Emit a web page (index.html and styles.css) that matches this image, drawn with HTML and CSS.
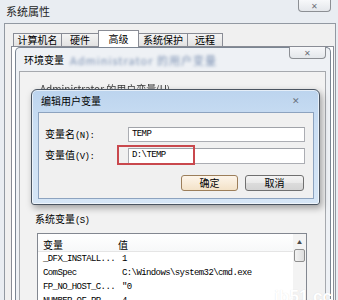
FILE: index.html
```html
<!DOCTYPE html>
<html lang="zh-CN">
<head>
    <meta charset="UTF-8">
    <title>系统属性</title>
    <link rel="stylesheet" href="styles.css">
</head>
<body>
<div class="win">
    <div class="win-title">
        <span class="win-caption">系统属性</span>
        <div class="close-btn">✕</div>
    </div>
    <div class="win-body">
        <div class="tabs">
            <div class="tab t1">计算机名</div>
            <div class="tab t2">硬件</div>
            <div class="tab t3 selected">高级</div>
            <div class="tab t4">系统保护</div>
            <div class="tab t5">远程</div>
        </div>
        <div class="tab-panel">
            <div class="env">
                <div class="env-title">
                    <span>环境变量</span>
                    <span class="smudge">Administrator 的用户变量</span>
                    <div class="close-btn env-close">✕</div>
                </div>
                <div class="env-body">
                    <div class="user-label">Administrator 的用户变量(U)</div>
                    <div class="user-list"></div>
                    <div class="group-label">系统变量<span class="mono">(S)</span></div>
                    <div class="listbox">
                        <div class="list-main">
                            <div class="list-head"><span class="col1">变量</span><span class="col2">值</span></div>
                            <div class="row mono"><span class="col1">_DFX_INSTALL...</span><span class="col2">1</span></div>
                            <div class="row mono"><span class="col1">ComSpec</span><span class="col2">C:\Windows\system32\cmd.exe</span></div>
                            <div class="row mono"><span class="col1">FP_NO_HOST_C...</span><span class="col2">"0</span></div>
                            <div class="row mono"><span class="col1">NUMBER_OF_PR...</span><span class="col2">4</span></div>
                        </div>
                        <div class="scrollbar">
                            <div class="sb-arrow">▲</div>
                            <div class="sb-thumb"></div>
                            <div class="sb-track"></div>
                            <div class="sb-arrow">▼</div>
                        </div>
                    </div>
                </div>
            </div>
        </div>
    </div>

    <div class="dialog">
        <div class="dlg-title">
            <span>编辑用户变量</span>
            <span class="dlg-x">✕</span>
        </div>
        <div class="dlg-client">
            <div class="field">
                <span class="field-label">变量名<span class="mono">(N):</span></span>
                <div class="input mono">TEMP</div>
            </div>
            <div class="field field-value">
                <span class="field-label">变量值<span class="mono">(V):</span></span>
                <div class="input mono">D:\TEMP</div>
                <div class="mark"></div>
            </div>
            <div class="dlg-buttons">
                <div class="btn btn-default">确定</div>
                <div class="btn btn-cancel">取消</div>
            </div>
        </div>
    </div>

    <div class="watermark">jb51.cc</div>
</div>
</body>
</html>
```

FILE: styles.css
```css
body {
    margin: 0;
    font-family: "Noto Sans CJK SC", "Liberation Sans", sans-serif;
    font-size: 10px;
    line-height: 12px;
    color: #000;
}
.mono {
    font-family: "Liberation Mono", "Noto Sans CJK SC", monospace;
    font-size: 9px;
    letter-spacing: -0.6px;
}
.win {
    position: relative;
    width: 338px;
    height: 300px;
    overflow: hidden;
    background-color: #e9edf2;
    display: flex;
    flex-direction: column;
}
.win-title {
    height: 23px;
    display: flex;
    align-items: flex-start;
    flex-shrink: 0;
}
.win-caption {
    font-size: 11px;
    line-height: 23px;
    margin-left: 6px;
    color: #1e1e1e;
}
.close-btn {
    margin-left: auto;
    margin-right: 7px;
    width: 33px;
    height: 12px;
    box-sizing: border-box;
    border: 1px solid #8c8f94;
    border-top: none;
    border-radius: 0 0 4px 4px;
    background: linear-gradient(#f7f8fa, #e4e7eb);
    color: #6d7178;
    font-size: 8px;
    line-height: 11px;
    text-align: center;
}
.win-body {
    flex: 1;
    margin: 0 2px 0 4px;
    padding: 6px 1px 0 6px;
    border: 1px solid #9299a2;
    border-bottom: none;
    background-color: #f0f0f0;
    display: flex;
    flex-direction: column;
}
.tabs {
    display: flex;
    align-items: flex-end;
    height: 16px;
    margin-left: 2px;
    flex-shrink: 0;
}
.tab {
    box-sizing: border-box;
    height: 13px;
    margin-right: -1px;
    border: 1px solid #898c95;
    border-bottom: none;
    background: linear-gradient(#f4f4f4, #e2e2e2);
    text-align: center;
    line-height: 12px;
}
.t1 { width: 49px; }
.t2 { width: 38px; }
.t3 { width: 41px; }
.t4 { width: 50px; }
.t5 { width: 36px; }
.tab.selected {
    height: 17px;
    margin-bottom: -1px;
    background: #fff;
    position: relative;
    z-index: 1;
    line-height: 15px;
}
.tab-panel {
    flex: 1;
    border: 1px solid #898c95;
    border-bottom: none;
    background-color: #fff;
    padding: 0 2px 0 3px;
    display: flex;
    flex-direction: column;
}
.env {
    flex: 1;
    border: 1px solid #7b8592;
    border-bottom: none;
    border-radius: 5px 5px 0 0;
    background-color: #eef1f5;
    padding: 0 4px 0 3px;
    display: flex;
    flex-direction: column;
}
.env-title {
    height: 23px;
    display: flex;
    align-items: center;
    padding-left: 5px;
    flex-shrink: 0;
}
.smudge {
    margin-left: 6px;
    color: #7e93b4;
    filter: blur(1.4px);
    font-size: 11px;
    letter-spacing: 1px;
}
.env-close {
    align-self: flex-start;
    margin-top: -1px;
    margin-right: 0;
    width: 37px;
}
.env-body {
    flex: 1;
    border: 1px solid #a6a9ae;
    border-bottom: none;
    background-color: #f2f2f2;
    padding: 11px 0 0 15px;
}
.user-label {
    margin-left: 5px;
    color: #3a3a3a;
    filter: blur(0.6px);
}
.user-list {
    height: 104px;
    margin: 4px 18px 0 2px;
    border: 1px solid #828790;
    background-color: #fff;
}
.group-label {
    margin-top: 8px;
}
.listbox {
    display: flex;
    height: 80px;
    margin: 6px 18px 0 2px;
    border: 1px solid #828790;
    background-color: #fff;
}
.list-main {
    flex: 1;
}
.list-head {
    display: flex;
    height: 18px;
    box-sizing: border-box;
    padding-top: 5px;
    border-bottom: 1px solid #e5e5e5;
    background: linear-gradient(#fff, #f7f8f9);
}
.row {
    display: flex;
    height: 14px;
    line-height: 14px;
}
.col1 {
    width: 80px;
    padding-left: 5px;
    box-sizing: border-box;
    white-space: nowrap;
}
.col2 {
    padding-left: 4px;
    white-space: nowrap;
}
.list-head .col2 {
    padding-left: 0;
}
.scrollbar {
    width: 13px;
    display: flex;
    flex-direction: column;
    background-color: #f3f3f3;
}
.sb-arrow {
    height: 15px;
    font-size: 5px;
    line-height: 15px;
    text-align: center;
    color: #4a4a4a;
}
.sb-thumb {
    height: 13px;
    box-sizing: border-box;
    margin: 0 1px;
    border: 1px solid #8f8f8f;
    border-radius: 2px;
    background: linear-gradient(90deg, #f3f3f3, #dedede);
}
.sb-track {
    flex: 1;
}
.dialog {
    position: absolute;
    left: 31px;
    top: 89px;
    width: 289px;
    height: 116px;
    box-sizing: border-box;
    border: 1px solid #4b5561;
    border-radius: 6px 6px 3px 3px;
    background: linear-gradient(#bcd4ee, #cadef3 30%, #d6e6f6);
    box-shadow: 2px 3px 7px rgba(0, 0, 0, 0.35), inset 0 0 0 1px rgba(255, 255, 255, 0.6);
    padding: 0 5px 5px 6px;
    display: flex;
    flex-direction: column;
    z-index: 2;
}
.dlg-title {
    height: 22px;
    display: flex;
    align-items: center;
    padding-left: 3px;
    flex-shrink: 0;
}
.dlg-x {
    margin-left: auto;
    margin-right: 14px;
    color: #6b7480;
    font-size: 9px;
}
.dlg-client {
    flex: 1;
    border: 1px solid #8da3bf;
    background-color: #f0f0f0;
    padding: 14px 8px 0 6px;
}
.field {
    display: flex;
    align-items: center;
    height: 15px;
}
.field-value {
    position: relative;
    height: 16px;
    margin-top: 6px;
}
.field-label {
    width: 83px;
    flex-shrink: 0;
}
.input {
    flex: 1;
    height: 100%;
    box-sizing: border-box;
    border: 1px solid #abadb3;
    border-top-color: #a0a3a9;
    background-color: #fff;
    padding-left: 3px;
    line-height: 13px;
}
.mark {
    position: absolute;
    left: 72px;
    top: -3px;
    width: 78px;
    height: 20px;
    box-sizing: border-box;
    border: 2px solid #c9484d;
}
.dlg-buttons {
    display: flex;
    justify-content: flex-end;
    gap: 7px;
    margin-top: 11px;
    margin-right: 1px;
}
.btn {
    height: 16px;
    box-sizing: border-box;
    border: 1px solid #707070;
    border-radius: 3px;
    text-align: center;
    line-height: 14px;
}
.btn-default {
    width: 57px;
    border-color: #9c7e5a;
    background: linear-gradient(#fdf5ea, #f3e2c8);
}
.btn-cancel {
    width: 59px;
    background: linear-gradient(#f4f4f4, #e9e9e9 50%, #dcdcdc 50%, #d4d4d4);
}
.watermark {
    position: absolute;
    right: 6px;
    bottom: -3px;
    font-family: "Liberation Sans", sans-serif;
    font-weight: bold;
    font-size: 17px;
    color: #fff;
    text-shadow: 0 0 1px rgba(0, 0, 0, 0.12);
    z-index: 3;
}
```
